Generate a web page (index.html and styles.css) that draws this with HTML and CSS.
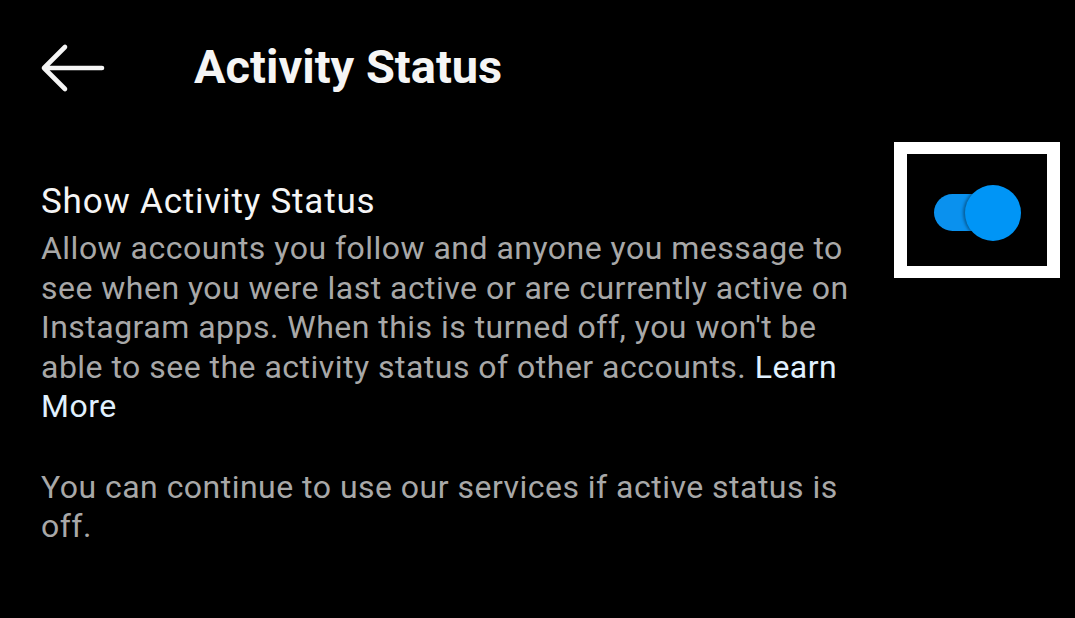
FILE: index.html
```html
<!DOCTYPE html>
<html lang="en">
<head>
<meta charset="utf-8">
<title>Activity Status</title>
<link rel="stylesheet" href="styles.css">
</head>
<body>
<header class="topbar">
  <svg class="back" width="66" height="50" viewBox="0 0 66 50" aria-label="Back">
    <path d="M25 4 L4 25 L25 46 M4 25 H62" fill="none" stroke="#f5f5f5" stroke-width="4.6" stroke-linecap="round" stroke-linejoin="round"/>
  </svg>
  <h1 class="title">Activity Status</h1>
</header>
<main class="setting">
  <div class="setting-text">
    <h2 class="setting-name">Show Activity Status</h2>
    <p class="desc">Allow accounts you follow and anyone you message to see when you were last active or are currently active on Instagram apps. When this is turned off, you won't be able to see the activity status of other accounts. <a class="link" href="#">Learn More</a></p>
    <p class="desc note">You can continue to use our services if active status is off.</p>
  </div>
  <div class="highlight">
    <div class="toggle">
      <span class="track"></span>
      <span class="thumb"></span>
    </div>
  </div>
</main>
</body>
</html>
```
FILE: styles.css
```css
html, body {
  margin: 0;
  padding: 0;
  background: #000;
}
body {
  width: 1075px;
  height: 618px;
  overflow: hidden;
  font-family: Roboto, "Liberation Sans", sans-serif;
  color: #f5f5f5;
}
.topbar {
  display: flex;
  align-items: center;
  padding: 39px 0 0 40px;
  height: 56px;
}
.back {
  display: block;
  margin-top: 2px;
}
.title {
  margin: 0 0 0 88px;
  font-size: 47px;
  line-height: 56px;
  font-weight: 700;
  color: #f5f5f5;
}
.setting {
  display: flex;
  justify-content: space-between;
  align-items: flex-start;
  margin-top: 47px;
  padding: 0 15px 0 41px;
}
.setting-text {
  width: 818px;
  padding-top: 40px;
}
.setting-name {
  margin: 0 0 7px 0;
  font-size: 35px;
  line-height: 40px;
  letter-spacing: 0.8px;
  font-weight: 400;
  color: #f5f5f5;
}
.desc {
  margin: 0;
  font-size: 32px;
  line-height: 39.5px;
  letter-spacing: 0.48px;
  color: #a8a8a8;
}
.link {
  color: #e0f1ff;
  text-decoration: none;
}
.note {
  margin-top: 41px;
}
.highlight {
  width: 140px;
  height: 106px;
  border: 13px solid #fff;
  border-top-width: 12px;
  border-bottom-width: 12px;
  display: flex;
  align-items: center;
  justify-content: center;
  padding-top: 6px;
  box-sizing: content-box;
}
.toggle {
  position: relative;
  width: 87px;
  height: 56px;
}
.track {
  position: absolute;
  left: 0;
  top: 9px;
  width: 62px;
  height: 37px;
  border-radius: 19px;
  background: #0a91ee;
}
.thumb {
  position: absolute;
  right: 0;
  top: 0;
  width: 56px;
  height: 56px;
  border-radius: 50%;
  background: #0095f6;
  box-shadow: -2px 0 3px rgba(0, 0, 0, 0.35);
}
```
